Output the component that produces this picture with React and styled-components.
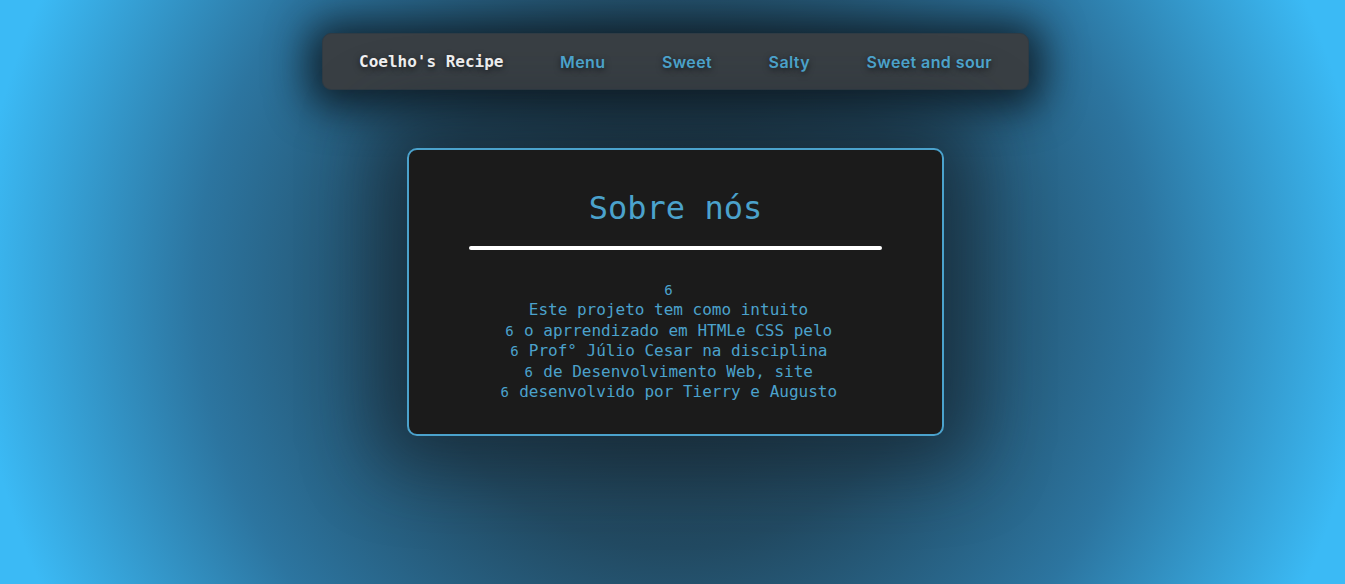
import styled, { createGlobalStyle } from "styled-components";

const GlobalStyle = createGlobalStyle`
  html, body {
    margin: 0;
    padding: 0;
  }
  body {
    min-height: 100vh;
    background: radial-gradient(circle at 50% 50%, #1c2f3b 0%, #224a62 35%, #2c75a0 65%, #3bbaf5 95%);
    background-attachment: fixed;
  }
`;

const Page = styled.div`
  min-height: 584px;
  display: flex;
  flex-direction: column;
  align-items: center;
  padding: 33px 0 0 6px;
  box-sizing: border-box;
`;

const Nav = styled.nav`
  width: 707px;
  height: 57px;
  box-sizing: border-box;
  display: flex;
  align-items: center;
  justify-content: space-between;
  padding: 0 36px;
  background: #393f44;
  border: 1px solid #2f3b44;
  border-radius: 9px;
  box-shadow: 0 4px 40px 14px rgba(10, 18, 24, 0.8);
`;

const Brand = styled.span`
  font-family: "DejaVu Sans Mono", "Liberation Mono", monospace;
  font-weight: bold;
  font-size: 16px;
  color: #f2f2f2;
  text-shadow: 0 2px 6px rgba(0, 0, 0, 0.6);
`;

const NavLink = styled.a`
  font-family: "Inter", "Open Sans", sans-serif;
  font-weight: 600;
  font-size: 16px;
  letter-spacing: 0.4px;
  color: #4ea6cf;
  text-decoration: none;
  text-shadow: 0 2px 6px rgba(0, 0, 0, 0.6);
`;

const Card = styled.section`
  margin-top: 58px;
  width: 537px;
  box-sizing: border-box;
  background: #1b1b1b;
  border: 2px solid #4ba2cc;
  border-radius: 10px;
  padding: 36px 0 32px;
  display: flex;
  flex-direction: column;
  align-items: center;
  box-shadow: 0 0 70px 30px rgba(20, 34, 44, 0.6);
  font-family: "DejaVu Sans Mono", "Liberation Mono", monospace;
`;

const Title = styled.h1`
  margin: 0;
  font-size: 32px;
  font-weight: normal;
  color: #4ba2cc;
  line-height: 44px;
`;

const Rule = styled.div`
  width: 413px;
  height: 4px;
  border-radius: 2px;
  background: #ffffff;
  margin-top: 16px;
`;

const Text = styled.p`
  margin: 30px 0 0;
  padding-right: 14px;
  text-align: center;
  font-size: 16px;
  line-height: 20.4px;
  color: #4ba2cc;
`;

const Mark = styled.span`
  display: inline-block;
  width: 9.63px;
  text-align: center;
  font-size: 14px;
  line-height: 0;
`;

const links = ["Menu", "Sweet", "Salty", "Sweet and sour"];

const lines = [
  "",
  "Este projeto tem como intuito",
  " o aprrendizado em HTMLe CSS pelo",
  " Prof° Júlio Cesar na disciplina",
  " de Desenvolvimento Web, site",
  " desenvolvido por Tierry e Augusto",
];

export default function App() {
  return (
    <>
      <GlobalStyle />
      <Page>
        <Nav>
          <Brand>Coelho's Recipe</Brand>
          {links.map((l) => (
            <NavLink key={l} href="#">
              {l}
            </NavLink>
          ))}
        </Nav>
        <Card>
          <Title>Sobre nós</Title>
          <Rule />
          <Text>
            {lines.map((l, i) => (
              <span key={i}>
                {i !== 1 && <Mark>6</Mark>}
                {l}
                <br />
              </span>
            ))}
          </Text>
        </Card>
      </Page>
    </>
  );
}
